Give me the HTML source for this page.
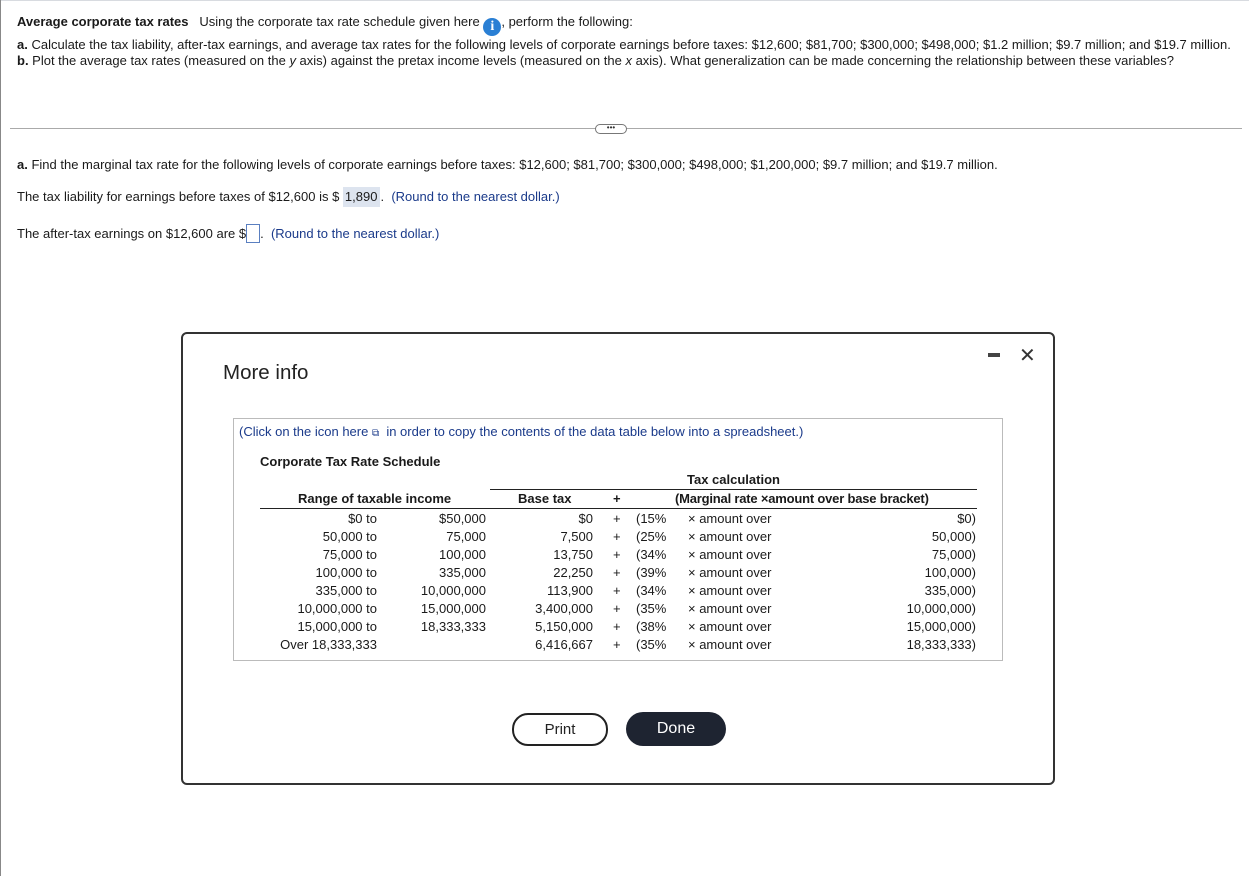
<!DOCTYPE html>
<html><head><style>
body{margin:0;width:1249px;height:876px;background:#fff;font-family:"Liberation Sans",Arial,sans-serif;font-size:13px;color:#1a1a1a;position:relative;overflow:hidden}
.a{position:absolute;white-space:nowrap}
.r{text-align:right}
.blue{color:#1a3a8a}
</style></head><body>
<div class="a" style="left:0;top:0;width:1249px;height:1px;background:#d8dbe0"></div>
<div class="a" style="left:0;top:0;width:1px;height:876px;background:#888"></div>
<div class="a" style="left:17px;top:14px"><b>Average corporate tax rates</b>&nbsp;&nbsp; Using the corporate tax rate schedule given here <span style="display:inline-block;width:18px;height:18px;border-radius:50%;background:#2a7fd4;color:#fff;font-weight:bold;text-align:center;line-height:18px;font-family:'Liberation Serif',serif;font-size:14px;vertical-align:-4px">i</span>, perform the following:</div>
<div class="a" style="left:17px;top:37px"><b>a.</b> Calculate the tax liability, after-tax earnings, and average tax rates for the following levels of corporate earnings before taxes: $12,600; $81,700; $300,000; $498,000; $1.2 million; $9.7 million; and $19.7 million.</div>
<div class="a" style="left:17px;top:53px"><b>b.</b> Plot the average tax rates (measured on the <i>y</i> axis) against the pretax income levels (measured on the <i>x</i> axis). What generalization can be made concerning the relationship between these variables?</div>
<div class="a" style="left:10px;top:128px;width:1232px;height:1px;background:#aaa"></div>
<div class="a" style="left:595px;top:124px;width:30px;height:8px;border:1px solid #777;border-radius:5px;background:#fff;font-size:8px;line-height:6px;text-align:center;color:#333">•••</div>
<div class="a" style="left:17px;top:157px"><b>a.</b> Find the marginal tax rate for the following levels of corporate earnings before taxes: $12,600; $81,700; $300,000; $498,000; $1,200,000; $9.7 million; and $19.7 million.</div>
<div class="a" style="left:17px;top:189px">The tax liability for earnings before taxes of $12,600 is $ <span style="background:#dde4ef;padding:2px 3px 3px 2px">1,890</span>.&nbsp; <span class="blue">(Round to the nearest dollar.)</span></div>
<div class="a" style="left:17px;top:224px">The after-tax earnings on $12,600 are $<span style="display:inline-block;width:12px;height:17px;border:1px solid #5a7fc0;vertical-align:-5px"></span>.&nbsp; <span class="blue">(Round to the nearest dollar.)</span></div>

<div class="a" style="left:181px;top:332px;width:870px;height:449px;border:2px solid #333;border-radius:6px;background:#fff"></div>
<div class="a" style="left:223px;top:361px;font-size:20.5px;color:#222">More info</div>
<div class="a" style="left:988px;top:353px;width:12px;height:4px;background:#444"></div>
<div class="a" style="left:1019px;top:346px;font-size:20px;color:#333;line-height:20px">✕</div>
<div class="a" style="left:233px;top:418px;width:768px;height:241px;border:1px solid #bbb"></div>
<div class="a blue" style="left:239px;top:424px">(Click on the icon here <span style="font-size:10px">⧉</span>&nbsp; in order to copy the contents of the data table below into a spreadsheet.)</div>
<div class="a" style="left:260px;top:454px"><b>Corporate Tax Rate Schedule</b></div>
<div class="a" style="left:687px;top:472px"><b>Tax calculation</b></div>
<div class="a" style="left:490px;top:489px;width:487px;height:1px;background:#222"></div>
<div class="a" style="left:298px;top:491px"><b>Range of taxable income</b></div>
<div class="a" style="left:518px;top:491px"><b>Base tax</b></div>
<div class="a" style="left:613px;top:491px"><b>+</b></div>
<div class="a" style="left:675px;top:491px;letter-spacing:-0.2px"><b>(Marginal rate ×amount over base bracket)</b></div>
<div class="a" style="left:260px;top:508px;width:717px;height:1px;background:#222"></div>
<div id="rows"></div>
<script>
var d=[["$0 to","$50,000","$0","(15%","$0)"],["50,000 to","75,000","7,500","(25%","50,000)"],["75,000 to","100,000","13,750","(34%","75,000)"],["100,000 to","335,000","22,250","(39%","100,000)"],["335,000 to","10,000,000","113,900","(34%","335,000)"],["10,000,000 to","15,000,000","3,400,000","(35%","10,000,000)"],["15,000,000 to","18,333,333","5,150,000","(38%","15,000,000)"],["Over 18,333,333","","6,416,667","(35%","18,333,333)"]];
var h="";d.forEach(function(r,i){var t=511+i*18;
h+='<div class="a r" style="left:260px;width:117px;top:'+t+'px">'+r[0]+'</div>';
h+='<div class="a r" style="left:386px;width:100px;top:'+t+'px">'+r[1]+'</div>';
h+='<div class="a r" style="left:500px;width:93px;top:'+t+'px">'+r[2]+'</div>';
h+='<div class="a" style="left:613px;top:'+t+'px">+</div>';
h+='<div class="a" style="left:636px;top:'+t+'px">'+r[3]+'</div>';
h+='<div class="a" style="left:688px;top:'+t+'px">× amount over</div>';
h+='<div class="a r" style="left:860px;width:116px;top:'+t+'px">'+r[4]+'</div>';});
document.getElementById("rows").innerHTML=h;
</script>
<div class="a" style="left:512px;top:713px;width:92px;height:29px;border:2px solid #222;border-radius:16px;text-align:center;line-height:29px;font-size:15px;color:#222">Print</div>
<div class="a" style="left:626px;top:712px;width:100px;height:34px;border-radius:17px;background:#1e2431;color:#fff;text-align:center;line-height:34px;font-size:16px">Done</div>
</body></html>
